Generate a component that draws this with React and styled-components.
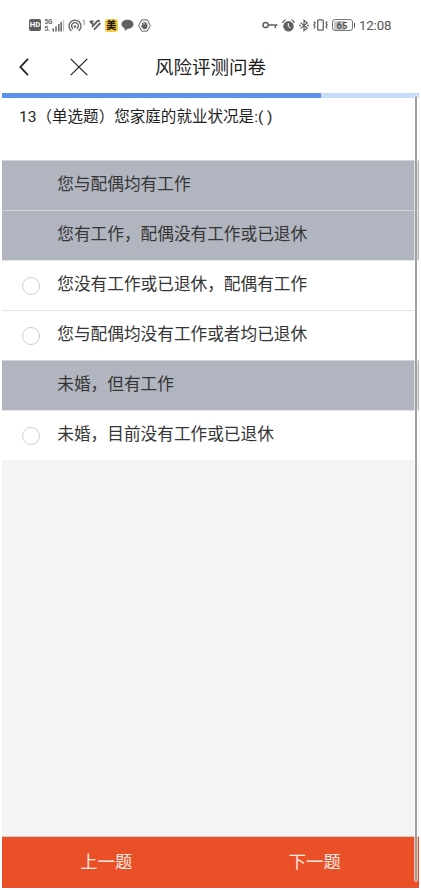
import React from 'react';
import styled, {createGlobalStyle} from 'styled-components';

const GlobalStyle = createGlobalStyle`
    * {
        box-sizing: border-box;
    }

    body {
        margin: 0;
        background-color: #fff;
        font-family: Roboto, "Noto Sans CJK SC", sans-serif;
    }
`;

const Screen = styled.div`
    position: relative;
    display: flex;
    flex-direction: column;
    width: 417px;
    height: 888px;
    margin-left: 2px;
    background-color: #fff;
`;

const StatusBar = styled.div`
    display: flex;
    justify-content: space-between;
    align-items: center;
    height: 50px;
    padding: 0 27px;
    color: #616161;
`;

const StatusGroup = styled.div`
    display: flex;
    align-items: center;
    gap: ${({gap}) => gap}px;
`;

const Icon = styled.svg`
    display: block;
    flex: none;
    fill: none;
    stroke: currentColor;
    overflow: visible;
`;

const HdBadge = styled.div`
    width: 12px;
    height: 12px;
    border-radius: 2px;
    background-color: #5e5e5e;
    color: #fff;
    font-size: 7.8px;
    font-weight: 700;
    line-height: 12.5px;
    text-align: center;
`;

const Signal = styled.div`
    display: flex;
    align-items: flex-end;
    width: 20px;
    height: 13px;
`;

const Network = styled.div`
    display: flex;
    flex-direction: column;
    justify-content: space-between;
    width: 8px;
    height: 13px;
    font-size: 6.5px;
    font-weight: 700;
    line-height: 7px;
`;

const Hotspot = styled.div`
    display: flex;
    align-items: flex-start;
    font-size: 7.5px;
    line-height: 7px;
`;

const AppBadge = styled.div`
    width: 13px;
    height: 13px;
    border-radius: 3px;
    background-color: #f6cb3c;
    color: #241c08;
    font-size: 10px;
    font-weight: 900;
    line-height: 13px;
    text-align: center;
`;

const Battery = styled.div`
    display: flex;
    align-items: center;
`;

const BatteryBody = styled.div`
    width: 21px;
    height: 12px;
    border: 1px solid #777;
    border-radius: 3px;
    background: linear-gradient(to right, #c7c7c7 68%, #fff 68%);
    background-clip: content-box;
    padding: 0.5px;
    color: #505050;
    font-size: 9.5px;
    font-weight: 700;
    line-height: 9.5px;
    text-align: center;
`;

const BatteryTip = styled.div`
    width: 1.5px;
    height: 5px;
    margin-left: 1px;
    background-color: #666;
`;

const Clock = styled.div`
    width: 33px;
    padding-top: 1px;
    color: #555;
    font-size: 13.2px;
    line-height: 16px;
    letter-spacing: -0.1px;
`;

const NavBar = styled.div`
    display: grid;
    grid-template-columns: 153px 1fr;
    align-items: center;
    height: 43px;
    padding-bottom: 9px;
`;

const NavActions = styled.div`
    display: flex;
    align-items: center;
    gap: 41px;
    padding-left: 17px;
    color: #222;
`;

const Title = styled.h1`
    margin: 0;
    padding-top: 2px;
    color: #1d1d1d;
    font-size: 18.5px;
    font-weight: 400;
    line-height: 26px;
`;

const Progress = styled.div`
    height: 5px;
    flex: none;
    background-color: #c7dcfa;
`;

const ProgressValue = styled.div`
    width: ${({percent}) => percent}%;
    height: 100%;
    background-color: #5b92ee;
`;

const Question = styled.div`
    flex: none;
    height: 62px;
    padding: 7px 17px 0;
    color: #1e1e1e;
    font-size: 15.55px;
    line-height: 24px;
    white-space: nowrap;
`;

const Options = styled.div`
    flex: none;
`;

const Option = styled.div`
    display: flex;
    align-items: center;
    height: 50px;
    padding-left: 20px;
    border-top: 1px solid ${({$locked}) => ($locked ? '#d2d4d6' : '#e4e4e4')};
    background-color: ${({$locked}) => ($locked ? '#b1b5bf' : '#fff')};
`;

const Radio = styled.div`
    width: 18px;
    height: 18px;
    border: 1px solid #cfcfcf;
    border-radius: 50%;
    visibility: ${({$locked}) => ($locked ? 'hidden' : 'visible')};
`;

const Label = styled.div`
    padding: 0 0 1px 17.3px;
    color: #353535;
    font-size: 16.67px;
    line-height: 24px;
`;

const Filler = styled.div`
    flex: 1;
    background-color: #f4f4f4;
`;

const Footer = styled.div`
    display: grid;
    grid-template-columns: 1fr 1fr;
    flex: none;
    height: 52px;
    border-top: 1px solid #ddc9c3;
    background-color: #ea5027;
`;

const FooterButton = styled.button`
    border: 0;
    padding: 0 0 2px;
    background: none;
    color: #fbe9e2;
    font-family: inherit;
    font-size: 17.3px;
    line-height: 24px;
`;

// Overlays the right edge of the page, footer included
const Scrollbar = styled.div`
    position: absolute;
    top: 95px;
    right: 1px;
    width: 4px;
    height: 787px;
    border: 1px solid rgba(255, 255, 255, 0.6);
    border-radius: 2px;
    background-color: #a0a0a0;
    background-clip: padding-box;
`;

const SignalIcon = () => (
    <Icon width="12" height="13" viewBox="0 0 12 13" strokeWidth="1.5">
        <path d="M1.2 12.5V9.5M4 12.5V7.5M6.8 12.5V5M9.2 12.5V3"/>
        <path d="M11.6 12.5V1" strokeWidth="1" opacity="0.45"/>
    </Icon>
);

const HotspotIcon = () => (
    <Icon width="14" height="13" viewBox="0 0 14 13" strokeWidth="1.3" strokeLinecap="round">
        <path d="M3 11.6A6 6 0 1 1 11 11.6M4.7 9.5A3.4 3.4 0 1 1 9.3 9.5"/>
        <circle cx="7" cy="7.5" r="1.3" fill="currentColor" stroke="none"/>
    </Icon>
);

const HealthIcon = () => (
    <Icon width="12" height="12" viewBox="0 0 12 12" strokeWidth="2" strokeLinecap="round">
        <path d="M1.5 2.8L3.9 5.2"/>
        <path d="M3.5 7.4L8.2 2.4Q9 1.6 9.9 2"/>
        <path d="M5.6 10.1L10.8 4.6"/>
        <path d="M1.5 2.8Q2.6 1.4 4.2 2.6" strokeWidth="1.4"/>
    </Icon>
);

const ChatIcon = () => (
    <Icon width="13" height="12" viewBox="0 0 13 12">
        <path d="M6.5.7C10 .7 12.5 2.6 12.5 5.2S10 9.7 6.7 9.7Q5.6 11.4 3.4 11.6Q4 10.4 3.6 9.1C1.7 8.3.5 7 .5 5.2C.5 2.6 3 .7 6.5.7Z" fill="currentColor" stroke="none"/>
    </Icon>
);

const HandIcon = () => (
    <Icon width="13" height="13" viewBox="0 0 13 13">
        <path d="M3.7.9H9.3L12.3 6.5L9.3 12.1H3.7L.7 6.5Z" strokeLinejoin="round"/>
        <path d="M4.5 7V4.3M6 6.5V3.3M7.4 6.5V3.5M8.8 7V4.6" strokeWidth="1.1" strokeLinecap="round"/>
        <path d="M4 5.8H9.3V8Q9 10.2 6.8 10.2Q4.8 10.2 3.2 7.2Z" fill="currentColor" stroke="none"/>
    </Icon>
);

const KeyIcon = () => (
    <Icon width="16" height="8" viewBox="0 0 16 8" strokeWidth="1.5">
        <circle cx="3.6" cy="4" r="2.6"/>
        <path d="M6.2 4H15.4M13.4 4V7"/>
    </Icon>
);

const AlarmIcon = () => (
    <Icon width="13" height="13" viewBox="0 0 13 13">
        <circle cx="6.5" cy="7.2" r="5.2" fill="currentColor" stroke="none"/>
        <path d="M.8 3.5Q1.4 1.6 3.3 1M12.2 3.5Q11.6 1.6 9.7 1" strokeWidth="1.3" strokeLinecap="round"/>
        <path d="M6.3 4.3V7.5L8.5 9" stroke="#fff" strokeWidth="1"/>
    </Icon>
);

const BluetoothIcon = () => (
    <Icon width="10" height="13" viewBox="0 0 10 13" strokeWidth="1.2">
        <path d="M1.5 3.6L8.2 9L5 11.7V1.3L8.2 4L1.5 9.4"/>
        <path d="M.2 6.5H1.8M8.2 6.5H9.8" strokeWidth="1.5"/>
    </Icon>
);

const VibrateIcon = () => (
    <Icon width="15" height="12" viewBox="0 0 15 12" strokeWidth="1.3">
        <rect x="4.7" y=".8" width="5.6" height="10.4" rx="1.2"/>
        <path d="M.8 2.5L2 4L.9 5.8L2 7.6L.8 9.5M14.2 2.5L13 4L14.1 5.8L13 7.6L14.2 9.5"/>
    </Icon>
);

const BackIcon = () => (
    <Icon width="10" height="18" viewBox="0 0 10 18" strokeWidth="1.8">
        <path d="M9 .8L1.4 9L9 17.2"/>
    </Icon>
);

const CloseIcon = () => (
    <Icon width="18" height="18" viewBox="0 0 18 18" strokeWidth="1.25">
        <path d="M.7 .9L17.3 17.1M17.3 .9L.7 17.1"/>
    </Icon>
);

const options = [
    {text: '您与配偶均有工作', locked: true},
    {text: '您有工作，配偶没有工作或已退休', locked: true},
    {text: '您没有工作或已退休，配偶有工作'},
    {text: '您与配偶均没有工作或者均已退休'},
    {text: '未婚，但有工作', locked: true},
    {text: '未婚，目前没有工作或已退休'},
];

const App = () => (
    <>
        <GlobalStyle/>
        <Screen>
            <StatusBar>
                <StatusGroup gap={3.4}>
                    <HdBadge>HD</HdBadge>
                    <Signal>
                        <Network><span>5G</span><span>5.</span></Network>
                        <SignalIcon/>
                    </Signal>
                    <Hotspot><HotspotIcon/>1</Hotspot>
                    <HealthIcon/>
                    <AppBadge>美</AppBadge>
                    <ChatIcon/>
                    <HandIcon/>
                </StatusGroup>
                <StatusGroup gap={4}>
                    <KeyIcon/>
                    <AlarmIcon/>
                    <BluetoothIcon/>
                    <VibrateIcon/>
                    <Battery>
                        <BatteryBody>65</BatteryBody>
                        <BatteryTip/>
                    </Battery>
                    <Clock>12:08</Clock>
                </StatusGroup>
            </StatusBar>
            <NavBar>
                <NavActions>
                    <BackIcon/>
                    <CloseIcon/>
                </NavActions>
                <Title>风险评测问卷</Title>
            </NavBar>
            <Progress>
                <ProgressValue percent={76.5}/>
            </Progress>
            <Question>13（单选题）您家庭的就业状况是:( )</Question>
            <Options>
                {options.map(({text, locked}) => (
                    <Option key={text} $locked={locked}>
                        <Radio $locked={locked}/>
                        <Label>{text}</Label>
                    </Option>
                ))}
            </Options>
            <Filler/>
            <Footer>
                <FooterButton>上一题</FooterButton>
                <FooterButton>下一题</FooterButton>
            </Footer>
            <Scrollbar/>
        </Screen>
    </>
);

export default App;
